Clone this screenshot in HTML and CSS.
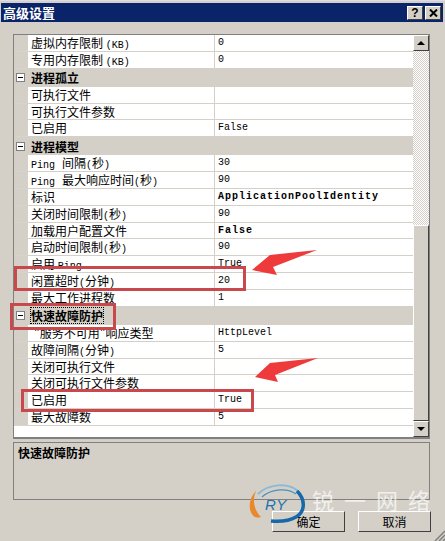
FILE: index.html
```html
<!DOCTYPE html>
<html lang="zh">
<head>
<meta charset="utf-8">
<title>高级设置</title>
<link rel="stylesheet" href="styles.css">
</head>
<body>
<div class="window">
  <header class="titlebar">
    <span class="title">高级设置</span>
    <div class="title-buttons">
      <button class="cap">?</button>
      <button class="cap">
        <svg width="9" height="8" viewBox="0 0 9 8"><path d="M1 0.5 L8 7.5 M8 0.5 L1 7.5" stroke="#000" stroke-width="2" fill="none"/></svg>
      </button>
    </div>
  </header>

  <section class="grid-panel">
    <div class="rows">
      <div class="row"><div class="name">虚拟内存限制 <span class="lat">(KB)</span></div><div class="val">0</div></div>
      <div class="row"><div class="name">专用内存限制 <span class="lat">(KB)</span></div><div class="val">0</div></div>
      <div class="group"><i class="minus"></i><span class="gname">进程孤立</span></div>
      <div class="row"><div class="name">可执行文件</div><div class="val"></div></div>
      <div class="row"><div class="name">可执行文件参数</div><div class="val"></div></div>
      <div class="row"><div class="name">已启用</div><div class="val">False</div></div>
      <div class="group"><i class="minus"></i><span class="gname">进程模型</span></div>
      <div class="row"><div class="name"><span class="lat lat-gap">Ping</span>间隔<span class="lat">(</span>秒<span class="lat">)</span></div><div class="val">30</div></div>
      <div class="row"><div class="name"><span class="lat lat-gap">Ping</span>最大响应时间<span class="lat">(</span>秒<span class="lat">)</span></div><div class="val">90</div></div>
      <div class="row"><div class="name">标识</div><div class="val strong">ApplicationPoolIdentity</div></div>
      <div class="row"><div class="name">关闭时间限制<span class="lat">(</span>秒<span class="lat">)</span></div><div class="val">90</div></div>
      <div class="row"><div class="name">加载用户配置文件</div><div class="val strong">False</div></div>
      <div class="row"><div class="name">启动时间限制<span class="lat">(</span>秒<span class="lat">)</span></div><div class="val">90</div></div>
      <div class="row"><div class="name">启用 <span class="lat">Ping</span></div><div class="val">True</div></div>
      <div class="row"><div class="name">闲置超时<span class="lat">(</span>分钟<span class="lat">)</span></div><div class="val">20</div></div>
      <div class="row"><div class="name">最大工作进程数</div><div class="val">1</div></div>
      <div class="group"><i class="minus"></i><span class="gname focused">快速故障防护</span></div>
      <div class="row"><div class="name indent">"服务不可用"响应类型</div><div class="val">HttpLevel</div></div>
      <div class="row"><div class="name">故障间隔<span class="lat">(</span>分钟<span class="lat">)</span></div><div class="val">5</div></div>
      <div class="row"><div class="name">关闭可执行文件</div><div class="val"></div></div>
      <div class="row"><div class="name">关闭可执行文件参数</div><div class="val"></div></div>
      <div class="row"><div class="name">已启用</div><div class="val">True</div></div>
      <div class="row"><div class="name">最大故障数</div><div class="val">5</div></div>
    </div>
    <div class="scrollbar">
      <div class="sb-btn"><i class="tri up"></i></div>
      <div class="sb-track"></div>
      <div class="sb-thumb"></div>
      <div class="sb-btn"><i class="tri down"></i></div>
    </div>
  </section>

  <section class="desc">快速故障防护</section>

  <footer class="actions">
    <button class="btn">确定</button>
    <button class="btn">取消</button>
  </footer>

  <div class="mark mark-a"></div>
  <div class="mark mark-b"></div>
  <div class="mark mark-c"></div>

  <svg class="overlay" width="445" height="541" viewBox="0 0 445 541">
    <path d="M252 270 L270 255 L317 250 L273 267 L277 275 Z" fill="#ee3a3a"/>
    <path d="M255 377 L270 363 L318 358 L275 375 L278 382 Z" fill="#ee3a3a"/>
    <path d="M256 491 C249 498 248 508 252 514 C254 518 258 518 261 517 C254 510 252 500 256 491 Z" fill="#e8892c"/>
    <path d="M258 494 C268 484 288 482 298 491" fill="none" stroke="#8db9d6" stroke-width="2"/>
    <path d="M262 497 C272 488 288 488 296 494" fill="none" stroke="#4a90c0" stroke-width="1.2"/>
    <path d="M297 491 C306 500 305 512 296 517 C289 521 281 522 271 521" fill="none" stroke="#1668a8" stroke-width="3.5"/>
  </svg>
  <span class="ry">RY</span>
  <span class="wm">锐一网络</span>
  <svg class="grip" width="11" height="11" viewBox="0 0 11 11"><path d="M11 1 L1 11 M11 5 L5 11 M11 9 L9 11" stroke="#808080" stroke-width="1.5" fill="none"/></svg>
</div>
</body>
</html>
```
FILE: styles.css
```css
* { box-sizing: border-box; }
html, body { margin: 0; padding: 0; }
body { width: 445px; height: 541px; overflow: hidden; background: #d4d0c8; }

.window {
  position: relative;
  width: 445px;
  height: 541px;
  display: flex;
  flex-direction: column;
  background: #d4d0c8;
  border-top: 1px solid #dcdcec;
  font-family: "Noto Sans CJK SC", "Liberation Sans", sans-serif;
  font-size: 12px;
  color: #000;
}

.titlebar {
  height: 19px;
  margin: 2px 2px 0 1px;
  padding: 0 2px;
  display: flex;
  align-items: center;
  justify-content: space-between;
  background: #0a246a;
}
.title { color: #fff; font-weight: 700; font-size: 13px; line-height: 19px; }
.title-buttons { display: flex; gap: 2px; }
.cap {
  width: 16px;
  height: 14px;
  padding: 0;
  display: flex;
  align-items: center;
  justify-content: center;
  background: #d4d0c8;
  border: 1px solid;
  border-color: #fff #404040 #404040 #fff;
  font: 700 12px/12px "Liberation Sans", sans-serif;
  color: #000;
}

.grid-panel {
  margin: 12px 15px 0 13px;
  height: 405px;
  display: flex;
  background: #fff;
  border: 1px solid #808080;
  border-bottom-width: 2px;
}
.rows { flex: 1; min-width: 0; }
.row {
  height: 16.85px;
  display: flex;
  padding-left: 14px;
  background: linear-gradient(#d4d0c8, #d4d0c8) left / 14px 100% no-repeat;
}
.name, .val {
  border-bottom: 1px solid #d4d0c8;
  line-height: 16px;
  white-space: nowrap;
  overflow: hidden;
}
.name { width: 187px; padding-left: 3px; border-right: 1px solid #d4d0c8; }
.name.indent { padding-left: 6px; }
.val {
  flex: 1;
  padding-left: 3px;
  font-family: "Liberation Mono", monospace;
  font-size: 10px;
}
.val.strong { font-weight: 700; letter-spacing: 1px; }
.lat { font-family: "Liberation Mono", monospace; font-size: 10px; }
.lat-gap { margin-right: 7px; }

.group {
  height: 18px;
  display: flex;
  align-items: center;
  background: #d4d0c8;
}
.minus {
  position: relative;
  width: 9px;
  height: 9px;
  margin: 0 4px 0 2px;
  background: #fff;
  border: 1px solid #808080;
}
.minus::after {
  content: "";
  position: absolute;
  left: 1px;
  top: 3px;
  width: 5px;
  height: 1px;
  background: #000;
}
.gname { font-weight: 700; line-height: 15px; margin-left: 2px; }
.gname.focused { outline: 1px dotted #000; }

.scrollbar {
  width: 16px;
  display: flex;
  flex-direction: column;
  background: #d4d0c8;
}
.sb-btn {
  flex: none;
  height: 16px;
  display: flex;
  align-items: center;
  justify-content: center;
  background: #d4d0c8;
  border: 1px solid;
  border-color: #fff #404040 #404040 #fff;
}
.sb-track {
  flex: none;
  height: 174px;
  background: conic-gradient(#fff 25%, #d4d0c8 0 50%, #fff 0 75%, #d4d0c8 0) 0 0 / 2px 2px;
}
.sb-thumb {
  flex: 1;
  background: #d4d0c8;
  border: 1px solid;
  border-color: #fff #404040 #404040 #fff;
}
.tri { width: 0; height: 0; border: 4px solid transparent; }
.tri.up { border-bottom-color: #000; border-top-width: 0; }
.tri.down { border-top-color: #000; border-bottom-width: 0; }

.desc {
  margin: 3px 15px 0 13px;
  height: 58px;
  padding: 1px 4px;
  border: 1px solid #808080;
  font-weight: 700;
  line-height: 17px;
}

.actions {
  margin: 11px 14px 0 0;
  display: flex;
  justify-content: flex-end;
  gap: 13px;
}
.btn {
  width: 73px;
  height: 21px;
  padding: 0;
  background: #d4d0c8;
  border: 1px solid;
  border-color: #fff #404040 #404040 #fff;
  font: 12px/17px "Noto Sans CJK SC", sans-serif;
  color: #000;
}

.mark { position: absolute; border: 3px solid #c9484b; }
.mark-a { left: 14px; top: 265px; width: 232px; height: 25px; }
.mark-b { left: 10px; top: 302px; width: 106px; height: 27px; }
.mark-c { left: 21px; top: 388px; width: 233px; height: 23px; }

.overlay { position: absolute; left: 0; top: -1px; pointer-events: none; }
.ry {
  position: absolute;
  left: 265px;
  top: 495px;
  font: italic 400 15px/17px "Liberation Sans", sans-serif;
  color: #1f72ad;
  letter-spacing: 1px;
}
.wm {
  position: absolute;
  left: 312px;
  top: 487px;
  font-size: 22px;
  line-height: 23px;
  letter-spacing: 10px;
  white-space: nowrap;
  color: rgba(255, 255, 255, .7);
}
.grip { position: absolute; right: 0; bottom: 0; }
```
